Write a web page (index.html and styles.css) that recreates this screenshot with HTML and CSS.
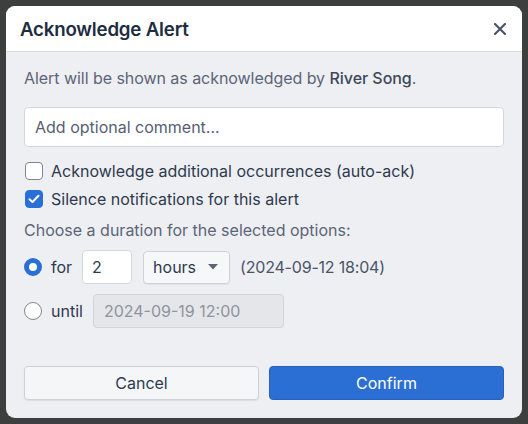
FILE: index.html
```html
<!DOCTYPE html>
<html>
<head>
<meta charset="utf-8">
<link rel="stylesheet" href="styles.css">
</head>
<body>
<div class="backdrop">
  <div class="dialog">
    <div class="header">
      <div class="title">Acknowledge Alert</div>
      <svg class="close" width="14" height="14" viewBox="0 0 14 14"><path d="M2 2L12 12M12 2L2 12" stroke="#4a5568" stroke-width="2.2" stroke-linecap="round"/></svg>
    </div>
    <div class="body">
      <div class="info">Alert will be shown as acknowledged by <span class="name">River Song</span>.</div>
      <div class="comment">Add optional comment...</div>
      <div class="check-row first"><span class="box"></span>Acknowledge additional occurrences (auto-ack)</div>
      <div class="check-row"><span class="box checked"><svg width="12" height="10" viewBox="0 0 12 10"><path d="M1.5 5.2L4.5 8L10.5 1.8" stroke="#fff" stroke-width="2" fill="none" stroke-linecap="round" stroke-linejoin="round"/></svg></span>Silence notifications for this alert</div>
      <div class="choose">Choose a duration for the selected options:</div>
      <div class="opt-row for-row">
        <span class="radio on"></span>
        <span class="lbl">for</span>
        <span class="num">2</span>
        <span class="select">hours<svg width="10" height="6" viewBox="0 0 10 6"><path d="M0 0H10L5 5.5Z" fill="#5b6577"/></svg></span>
        <span class="until-date">(2024-09-12 18:04)</span>
      </div>
      <div class="opt-row until-row">
        <span class="radio"></span>
        <span class="lbl">until</span>
        <span class="date">2024-09-19 12:00</span>
      </div>
      <div class="buttons">
        <div class="btn cancel">Cancel</div>
        <div class="btn confirm">Confirm</div>
      </div>
    </div>
  </div>
</div>
</body>
</html>
```
FILE: styles.css
```css
html, body {
  margin: 0;
  padding: 0;
}
body {
  background: #3d3e3e;
  font-family: Inter, "Noto Sans", sans-serif;
  width: 528px;
  height: 424px;
  overflow: hidden;
}
.backdrop {
  padding: 6px;
}
.dialog {
  width: 516px;
  height: 412px;
  background: #eeeff3;
  border-radius: 9px;
  overflow: hidden;
  box-sizing: border-box;
}
.header {
  height: 45px;
  background: #ffffff;
  border-bottom: 1px solid #d8dbe0;
  display: flex;
  align-items: center;
  justify-content: space-between;
  padding: 0 15px 0 14px;
}
.title {
  font-size: 18.7px;
  font-weight: 600;
  color: #1e2c40;
  letter-spacing: -0.2px;
  margin-top: 1px;
}
.close {
  margin-top: 1px;
}
.body {
  padding: 14px 18px 0 18px;
  display: flex;
  flex-direction: column;
}
.info {
  font-size: 16px;
  line-height: 24px;
  color: #5b6577;
  letter-spacing: -0.05px;
}
.info .name {
  color: #3d4858;
  font-weight: 500;
}
.comment {
  margin-top: 17px;
  height: 40px;
  box-sizing: border-box;
  background: #ffffff;
  border: 1px solid #d3d6dc;
  border-radius: 4px;
  padding: 0 10px;
  display: flex;
  align-items: center;
  font-size: 16px;
  color: #566073;
}
.check-row {
  display: flex;
  align-items: center;
  height: 24px;
  margin-top: 4px;
  font-size: 16px;
  color: #2d3a4e;
}
.check-row.first {
  margin-top: 12px;
}
.box {
  width: 18px;
  height: 18px;
  box-sizing: border-box;
  border: 1.5px solid #80868f;
  border-radius: 4px;
  background: #fff;
  margin: 0 8px 0 1px;
  display: flex;
  align-items: center;
  justify-content: center;
}
.box.checked {
  background: #2a6fd6;
  border-color: #2a6fd6;
}
.choose {
  margin-top: 7px;
  font-size: 16px;
  line-height: 24px;
  color: #5b6577;
}
.opt-row {
  display: flex;
  align-items: center;
  font-size: 16px;
  color: #2d3a4e;
  height: 34px;
}
.for-row {
  margin-top: 8px;
}
.until-row {
  margin-top: 10px;
}
.radio {
  width: 18px;
  height: 18px;
  box-sizing: border-box;
  border-radius: 50%;
  border: 1.5px solid #80868f;
  background: #fff;
}
.radio.on {
  border: 5px solid #2a6fd6;
}
.lbl {
  margin-left: 9px;
}
.num {
  margin-left: 10px;
  width: 50px;
  height: 34px;
  box-sizing: border-box;
  background: #fff;
  border: 1px solid #d3d6dc;
  border-radius: 4px;
  padding-left: 9px;
  display: flex;
  align-items: center;
}
.select {
  margin-left: 11px;
  width: 87px;
  height: 33px;
  box-sizing: border-box;
  background: #f6f7f9;
  border: 1px solid #cfd3d9;
  border-radius: 4px;
  padding: 0 11px 0 9px;
  display: flex;
  align-items: center;
  justify-content: space-between;
  box-shadow: 0 1px 1px rgba(0,0,0,0.06);
}
.until-date {
  margin-left: 10px;
  color: #4a5566;
  letter-spacing: -0.2px;
}
.date {
  margin-left: 10px;
  width: 191px;
  height: 34px;
  box-sizing: border-box;
  background: #e4e6ea;
  border: 1px solid #d0d3d8;
  border-radius: 4px;
  padding-left: 10px;
  display: flex;
  align-items: center;
  color: #8e949d;
}
.buttons {
  margin-top: 38px;
  display: flex;
  gap: 10px;
}
.btn {
  flex: 1;
  height: 34px;
  box-sizing: border-box;
  border-radius: 4px;
  display: flex;
  align-items: center;
  justify-content: center;
  font-size: 16px;
}
.cancel {
  background: #f5f6f8;
  border: 1px solid #cdd1d7;
  color: #2d3a4e;
  box-shadow: 0 1px 1px rgba(0,0,0,0.08);
}
.confirm {
  background: #2b6fd4;
  border: 1px solid #2561bd;
  color: #ffffff;
}
```
